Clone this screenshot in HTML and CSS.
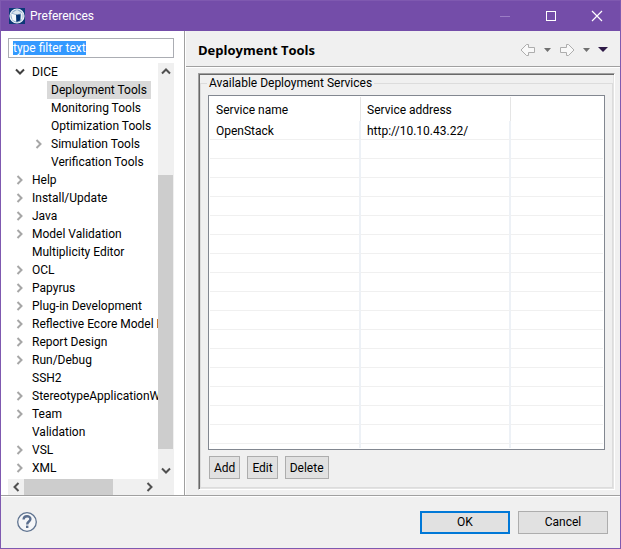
FILE: index.html
```html
<!DOCTYPE html>
<html lang="en">
<head>
<meta charset="utf-8">
<title>Preferences</title>
<link rel="stylesheet" href="styles.css">
</head>
<body>
<svg class="defs" width="0" height="0" aria-hidden="true">
  <symbol id="chevron" viewBox="0 0 8 10"><path d="M1.5 1 L5.5 5 L1.5 9" fill="none" stroke="currentColor" stroke-width="2"/></symbol>
  <symbol id="back" viewBox="0 0 16 14"><path d="M1 7 L6.5 1.5 L8.5 1.5 L8.5 4.5 L14.5 4.5 L14.5 9.5 L8.5 9.5 L8.5 12.5 L6.5 12.5 Z" fill="#f8f8f8" stroke="#adadad"/></symbol>
</svg>
<div class="window">
  <header class="titlebar">
    <svg class="app-icon" width="16" height="16" viewBox="0 0 16 16" aria-hidden="true">
      <rect width="16" height="16" fill="#0d3878"/>
      <circle cx="8" cy="8" r="7" fill="#8fabcb" stroke="#eef3f8" stroke-width="1.2"/>
      <path d="M2 5.5 L7 7 L7 13.5 L3.5 12 Z" fill="#f4f7fa"/>
      <path d="M7 6.5 L11.5 6.5 L11 12.5 L7.5 14 Z" fill="#06326f"/>
      <path d="M3 5 L8 2 L13 5 L8 6.5 Z" fill="#dbe5ee"/>
      <path d="M12.8 5 V11.5" stroke="#f4f7fa" stroke-width="1.4"/>
    </svg>
    <span class="title">Preferences</span>
    <button class="win-btn" type="button" aria-label="Minimize" disabled><svg width="12" height="12"><path d="M1 6.5 H11" stroke="#9b7cc5"/></svg></button>
    <button class="win-btn" type="button" aria-label="Maximize"><svg width="12" height="12"><rect x="1.5" y="1.5" width="9" height="9" fill="none" stroke="#fff"/></svg></button>
    <button class="win-btn" type="button" aria-label="Close"><svg width="12" height="12"><path d="M1 1 L11 11 M11 1 L1 11" stroke="#fff" stroke-width="1.2"/></svg></button>
  </header>

  <main class="body">
    <aside class="sidebar">
      <input class="filter" id="filter" type="text" value="type filter text" aria-label="Filter">
      <div class="tree-area">
        <ul class="tree">
          <li class="node open"><svg class="arrow" width="8" height="10"><use href="#chevron"/></svg>DICE</li>
          <li class="node child leaf"><span class="selected">Deployment Tools</span></li>
          <li class="node child leaf">Monitoring Tools</li>
          <li class="node child leaf">Optimization Tools</li>
          <li class="node child"><svg class="arrow" width="8" height="10"><use href="#chevron"/></svg>Simulation Tools</li>
          <li class="node child leaf">Verification Tools</li>
          <li class="node"><svg class="arrow" width="8" height="10"><use href="#chevron"/></svg>Help</li>
          <li class="node"><svg class="arrow" width="8" height="10"><use href="#chevron"/></svg>Install/Update</li>
          <li class="node"><svg class="arrow" width="8" height="10"><use href="#chevron"/></svg>Java</li>
          <li class="node"><svg class="arrow" width="8" height="10"><use href="#chevron"/></svg>Model Validation</li>
          <li class="node leaf">Multiplicity Editor</li>
          <li class="node"><svg class="arrow" width="8" height="10"><use href="#chevron"/></svg>OCL</li>
          <li class="node"><svg class="arrow" width="8" height="10"><use href="#chevron"/></svg>Papyrus</li>
          <li class="node"><svg class="arrow" width="8" height="10"><use href="#chevron"/></svg>Plug-in Development</li>
          <li class="node"><svg class="arrow" width="8" height="10"><use href="#chevron"/></svg>Reflective Ecore Model E</li>
          <li class="node"><svg class="arrow" width="8" height="10"><use href="#chevron"/></svg>Report Design</li>
          <li class="node"><svg class="arrow" width="8" height="10"><use href="#chevron"/></svg>Run/Debug</li>
          <li class="node leaf">SSH2</li>
          <li class="node"><svg class="arrow" width="8" height="10"><use href="#chevron"/></svg>StereotypeApplicationW</li>
          <li class="node"><svg class="arrow" width="8" height="10"><use href="#chevron"/></svg>Team</li>
          <li class="node leaf">Validation</li>
          <li class="node"><svg class="arrow" width="8" height="10"><use href="#chevron"/></svg>VSL</li>
          <li class="node"><svg class="arrow" width="8" height="10"><use href="#chevron"/></svg>XML</li>
        </ul>
        <div class="vbar">
          <button class="scroll-btn" type="button" aria-label="Scroll up"><svg class="up" width="8" height="10"><use href="#chevron"/></svg></button>
          <div class="track"><div class="thumb"></div></div>
          <button class="scroll-btn" type="button" aria-label="Scroll down"><svg class="down" width="8" height="10"><use href="#chevron"/></svg></button>
        </div>
        <div class="hbar">
          <button class="scroll-btn" type="button" aria-label="Scroll left"><svg class="left" width="8" height="10"><use href="#chevron"/></svg></button>
          <div class="track"><div class="thumb"></div></div>
          <button class="scroll-btn" type="button" aria-label="Scroll right"><svg width="8" height="10"><use href="#chevron"/></svg></button>
        </div>
        <div class="corner"></div>
      </div>
    </aside>

    <section class="page">
      <div class="page-head">
        <h1>Deployment Tools</h1>
        <nav class="history">
          <button type="button" aria-label="Back"><svg width="16" height="14"><use href="#back"/></svg></button>
          <button type="button" aria-label="Back history"><svg width="7" height="4"><path d="M0 0 H7 L3.5 4 Z" fill="#707070"/></svg></button>
          <button type="button" aria-label="Forward"><svg class="left" width="16" height="14"><use href="#back"/></svg></button>
          <button type="button" aria-label="Forward history"><svg width="7" height="4"><path d="M0 0 H7 L3.5 4 Z" fill="#707070"/></svg></button>
          <button type="button" aria-label="Menu"><svg width="10" height="5"><path d="M0 0 H10 L5 5 Z" fill="#2e1a47"/></svg></button>
        </nav>
      </div>
      <div class="frame">
        <fieldset class="group">
          <legend>Available Deployment Services</legend>
          <div class="table-box">
            <table>
              <colgroup><col class="c1"><col class="c2"><col></colgroup>
              <thead><tr><th>Service name</th><th>Service address</th><th></th></tr></thead>
              <tbody>
                <tr><td>OpenStack</td><td>http://10.10.43.22/</td><td></td></tr>
                <tr><td></td><td></td><td></td></tr>
                <tr><td></td><td></td><td></td></tr>
                <tr><td></td><td></td><td></td></tr>
                <tr><td></td><td></td><td></td></tr>
                <tr><td></td><td></td><td></td></tr>
                <tr><td></td><td></td><td></td></tr>
                <tr><td></td><td></td><td></td></tr>
                <tr><td></td><td></td><td></td></tr>
                <tr><td></td><td></td><td></td></tr>
                <tr><td></td><td></td><td></td></tr>
                <tr><td></td><td></td><td></td></tr>
                <tr><td></td><td></td><td></td></tr>
                <tr><td></td><td></td><td></td></tr>
                <tr><td></td><td></td><td></td></tr>
                <tr><td></td><td></td><td></td></tr>
                <tr><td></td><td></td><td></td></tr>
                <tr class="cut"><td></td><td></td><td></td></tr>
              </tbody>
            </table>
          </div>
          <div class="actions">
            <button class="btn" type="button">Add</button>
            <button class="btn" type="button">Edit</button>
            <button class="btn" type="button">Delete</button>
          </div>
        </fieldset>
      </div>
    </section>
  </main>

  <footer class="footer">
    <button class="help" type="button" aria-label="Help">
      <svg width="22" height="22" viewBox="0 0 22 22"><circle cx="11" cy="11" r="9.3" fill="#f5f6f8" stroke="#5f7390" stroke-width="1.3"/><path d="M7.6 8.6 C7.6 4.2 14.4 4.2 14.4 8 C14.4 10.6 11.2 10.4 11.2 13.4" fill="none" stroke="#5a6e8e" stroke-width="2.4"/><rect x="10" y="14.6" width="2.4" height="2.4" fill="#5a6e8e"/></svg>
    </button>
    <button class="btn wide default" type="button">OK</button>
    <button class="btn wide" type="button">Cancel</button>
  </footer>
</div>
<script src="main.js"></script>
</body>
</html>
```
FILE: styles.css
```css
* { box-sizing: border-box; }
body {
  margin: 0;
  font: 12px/18px Roboto, "Open Sans", sans-serif;
  color: #000;
  background: #f0f0f0;
}
button, input { font: inherit; color: inherit; }
button { margin: 0; padding: 0; border: 0; background: none; }
svg { display: block; flex: none; }
.defs { position: absolute; }
.left { transform: scaleX(-1); }
.up { transform: rotate(-90deg); }
.down { transform: rotate(90deg); }

.window {
  display: flex;
  flex-direction: column;
  height: 100vh;
  border: 1px solid #7f59b0;
}

/* Title bar */
.titlebar {
  display: flex;
  align-items: center;
  height: 30px;
  flex: none;
  padding-left: 8px;
  background: #744da9;
  color: #fff;
}
.title { flex: 1; padding-left: 5px; }
.win-btn {
  display: flex;
  align-items: center;
  justify-content: center;
  width: 46px;
  height: 28px;
}

/* Body */
.body { display: flex; flex: 1; min-height: 0; }
.sidebar {
  display: flex;
  flex-direction: column;
  gap: 5px;
  flex: none;
  width: 184px;
  padding: 7px 10px 0 7px;
  background: #fff;
  border-right: 1px solid #a0a0a0;
}
.filter {
  flex: none;
  width: 100%;
  height: 20px;
  padding: 0 4px;
  border: 1px solid #abadb3;
  background: #fff;
  outline: 0;
}
.filter::selection { background: #3399ff; color: #fff; }
.tree-area {
  display: grid;
  grid-template: minmax(0, 1fr) 16px / minmax(0, 1fr) 16px;
  flex: 1;
  min-height: 0;
}
.tree {
  margin: 0;
  padding: 0;
  list-style: none;
  overflow: hidden;
  white-space: nowrap;
}
.node { display: flex; align-items: center; height: 18px; padding-left: 8px; }
.node.child { padding-left: 27px; }
.node.leaf { padding-left: 24px; }
.node.child.leaf { padding-left: 39px; }
.node:not(.leaf) .arrow { margin-right: 8px; color: #a6a6a6; }
.node.open .arrow { transform: rotate(90deg); color: #404040; }
.node.child.leaf:not(:has(.selected)) { padding-left: 43px; }
.selected { padding: 0 4px; background: #d9d9d9; }

.vbar, .hbar { display: flex; background: #f0f0f0; color: #505050; }
.vbar { flex-direction: column; }
.corner { background: #f0f0f0; }
.scroll-btn {
  display: flex;
  align-items: center;
  justify-content: center;
  width: 16px;
  height: 16px;
}
.track { display: flex; flex: 1; }
.thumb { background: #cdcdcd; }
.vbar .track { flex-direction: column; justify-content: flex-end; padding-bottom: 14px; }
.vbar .thumb { height: 74%; width: 15px; }
.hbar .thumb { width: 75%; }

/* Preference page */
.page {
  display: flex;
  flex-direction: column;
  flex: 1;
  min-width: 0;
  border-left: 1px solid #fff;
}
.page-head {
  display: flex;
  align-items: center;
  justify-content: space-between;
  height: 37px;
  flex: none;
  padding: 1px 12px 0;
  border-bottom: 1px solid #fff;
  box-shadow: inset 0 -1px #a0a0a0;
}
h1 { margin: 0; font: 700 13px/18px "Open Sans", sans-serif; }
.history { display: flex; align-items: center; gap: 8px; }

.frame {
  display: flex;
  flex: 1;
  min-height: 0;
  margin: 5px 5px 5px 12px;
  border: 1px solid;
  border-color: #a0a0a0 #fff #fff #a0a0a0;
  box-shadow: inset 1px 1px #696969, inset -1px -1px #e3e3e3;
}
.group {
  display: flex;
  flex-direction: column;
  flex: 1;
  min-width: 0;
  margin: 1px;
  padding: 4px 7px 8px;
  border: 1px solid #dcdcdc;
}
legend { padding: 0 2px; margin-left: -1px; line-height: 16px; }
.table-box {
  flex: 1;
  min-height: 0;
  padding: 1px;
  overflow: hidden;
  border: 1px solid #828790;
  background: #fff;
}
table { width: 100%; table-layout: fixed; border-collapse: separate; border-spacing: 0; }
.c1 { width: 151px; }
.c2 { width: 150px; }
th, td { padding: 2px 6px 0; line-height: 16px; text-align: left; font-weight: 400; }
th { height: 24px; border-right: 1px solid #e5e5e5; }
td { height: 19px; border-right: 2px solid #edf1f6; border-bottom: 1px solid #f0f0f0; }
th:last-child, td:last-child { border-right: 0; }
.cut td { height: 4px; border-bottom: 0; }

.btn {
  height: 23px;
  padding: 0 4px;
  border: 1px solid #adadad;
  background: #e1e1e1;
}
.actions { display: flex; flex: none; gap: 7px; padding: 6px 1px 0; }

/* Footer */
.footer {
  display: flex;
  align-items: center;
  gap: 8px;
  flex: none;
  height: 53px;
  padding: 0 12px 0 15px;
  border-top: 1px solid #a0a0a0;
  box-shadow: inset 0 1px #fff;
}
.help { margin-right: auto; }
.wide { width: 90px; }
.default { border: 2px solid #0078d7; }
```
FILE: main.js
```js
const filter = document.getElementById("filter");
filter.focus();
filter.select();
```
